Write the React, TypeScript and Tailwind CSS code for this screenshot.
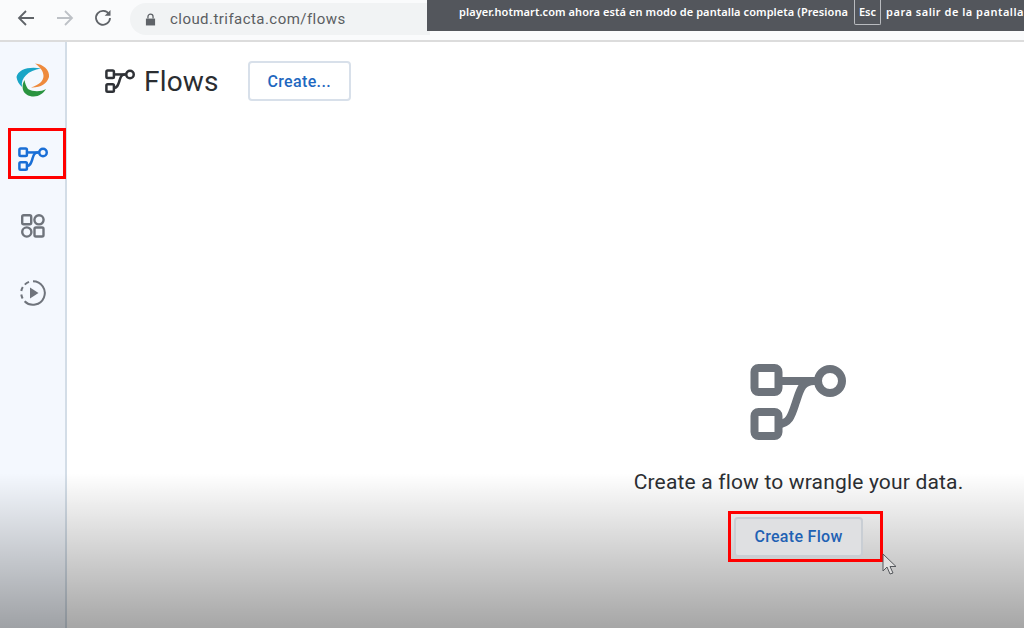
import React from "react";

function FlowIcon({ className, color }: { className: string; color: string }) {
  return (
    <svg viewBox="0 0 96 76" className={className} fill="none" stroke={color} strokeWidth={8}>
      <rect x="4.5" y="4" width="24" height="24" rx="4" />
      <rect x="4.5" y="48" width="24" height="24" rx="4" />
      <circle cx="80" cy="17" r="12" />
      <path d="M28 17H68" />
      <path d="M28 60C40 60 42 50 46 38C50 26 52 17 64 17" />
    </svg>
  );
}

function Logo() {
  return (
    <svg viewBox="0 0 34 34" className="w-[34px] h-[34px]" fill="none">
      <path d="M25 5.5C14 3 2 6 0.5 14C1 18 3 21 6 24C4.5 15 12 7.5 25 5.5Z" fill="#19a5c6" />
      <path d="M19 0.5C27 1 34 7 33 14C31 21 24 25 15 24.5C23 22 27.5 18 27.5 13C27.5 8 24 4 19 0.5Z" fill="#ee8a3c" />
      <path d="M8.5 17C5 23 6 31 14 33C21 35 27 31 30 26C25 29 17 29 12 26C10 23 9 20 8.5 17Z" fill="#2a9440" />
    </svg>
  );
}

function AppsIcon() {
  return (
    <svg viewBox="0 0 24 24" className="w-[24px] h-[24px]" fill="none" stroke="#6f747c" strokeWidth={2.4}>
      <rect x="1.2" y="1.2" width="9" height="9" rx="1.5" />
      <circle cx="18" cy="5.8" r="4.6" />
      <circle cx="5.8" cy="18" r="4.6" />
      <rect x="13.5" y="13.5" width="9" height="9" rx="1.5" />
    </svg>
  );
}

function RunIcon() {
  return (
    <svg viewBox="0 0 26 26" className="w-[26px] h-[26px]" fill="none">
      <path d="M13 1.2A11.8 11.8 0 1 1 4.6 21.3" stroke="#6f747c" strokeWidth={2} />
      <path d="M2.6 18.4A11.8 11.8 0 0 1 1.3 14.5M1.3 11A11.8 11.8 0 0 1 2.8 7M4.8 4.6A11.8 11.8 0 0 1 9 1.9" stroke="#6f747c" strokeWidth={2} />
      <path d="M10 7.5L18.5 13L10 18.5Z" fill="#6f747c" />
    </svg>
  );
}

export default function App() {
  return (
    <div className="relative w-[1024px] h-[628px] overflow-hidden bg-white flex flex-col font-['Roboto',sans-serif]">
      <header className="h-[42px] shrink-0 flex items-start bg-[#fafbfc] border-b-2 border-[#dcdcdc]">
        <div className="flex items-center h-9 pl-[17px] gap-[21px] shrink-0">
          <svg viewBox="0 0 18 18" className="w-[18px] h-[18px]" fill="none" stroke="#5f6368" strokeWidth={1.8}>
            <path d="M17 9H2M9 2L2 9L9 16" />
          </svg>
          <svg viewBox="0 0 18 18" className="w-[18px] h-[18px]" fill="none" stroke="#bdc1c6" strokeWidth={1.8}>
            <path d="M1 9H16M9 2L16 9L9 16" />
          </svg>
          <svg viewBox="0 0 18 18" className="w-[18px] h-[18px] -ml-[1px]" fill="none" stroke="#5f6368" strokeWidth={1.8}>
            <path d="M15 5.2A7 7 0 1 0 16 9" />
            <path d="M16.5 1V6.8H10.7Z" fill="#5f6368" stroke="none" />
          </svg>
        </div>
        <div className="ml-[18px] mt-[3px] w-[300px] h-[32px] flex items-center pl-[15px] bg-[#f1f3f4] rounded-l-2xl shrink-0">
          <svg viewBox="0 0 12 14" className="w-[11px] h-[13px]" fill="#5f6368">
            <path d="M1 6H11V13.5H1Z" />
            <path d="M3.2 6V4A2.8 2.8 0 0 1 8.8 4V6" fill="none" stroke="#5f6368" strokeWidth={1.4} />
          </svg>
          <span className="ml-[14px] text-[15px] tracking-[0.45px] whitespace-nowrap text-[#5b5e62]">cloud.trifacta.com/flows</span>
        </div>
        <div className="absolute left-[427px] top-0 w-[597px] h-[31px] bg-[#53565c] flex items-start pl-[32px] text-white text-[11px] font-semibold leading-[24px] whitespace-nowrap font-['Noto_Sans',sans-serif] overflow-hidden tracking-[0.07px]">
          <span>player.hotmart.com ahora está en modo de pantalla completa (Presiona</span>
          <span className="ml-[6px] mr-[5px] w-[28px] h-[25px] flex items-center justify-center border border-t-0 border-[#b9bbbf] rounded-b-[2px]">Esc</span>
          <span className="tracking-[0.5px]">para salir de la pantalla</span>
        </div>
      </header>

      <div className="flex-1 flex min-h-0">
        <aside className="w-[67px] shrink-0 bg-[#f4f8fe] border-r-2 border-[#d3dde7] flex flex-col items-center">
          <div className="mt-[21px]"><Logo /></div>
          <div className="relative z-10 mt-[31px] self-start ml-[8px] w-[58px] h-[51px] flex items-start pl-[7px] pt-[16px] border-[3px] border-[#ff0000]">
            <FlowIcon className="w-[30px] h-[24px] shrink-0" color="#1a6fd6" />
          </div>
          <div className="mt-[35px]"><AppsIcon /></div>
          <div className="mt-[42px]"><RunIcon /></div>
        </aside>

        <main className="flex-1 relative min-w-0">
          <div className="flex items-center pl-[38px] pt-[19px]">
            <FlowIcon className="w-[30px] h-[24px]" color="#2f3237" />
            <h1 className="ml-[9px] h-[40px] text-[28px] leading-[42px] text-[#2a2d31] font-normal tracking-[0.2px]">Flows</h1>
            <button className="ml-[29px] w-[103px] h-[40px] pt-[1px] rounded-[4px] bg-white border-2 border-[#d8e0ea] text-[#1f68c0] text-[16px] tracking-[0.35px] font-medium">Create...</button>
          </div>

          <div className="flex flex-col items-center ml-[564px] w-[335px] mt-[263px]">
            <FlowIcon className="w-[96px] h-[76px] -ml-[2px]" color="#6d737b" />
            <p className="mt-[28px] text-[21px] leading-[28px] text-[#2c2f33] whitespace-nowrap tracking-[0.17px]">Create a flow to wrangle your data.</p>
            <div className="relative z-10 ml-[14px] mt-[15px] w-[155px] h-[51px] border-[3px] border-[#ff0000] flex items-center pl-[3px]">
              <button className="w-[129px] h-[40px] rounded-[4px] bg-[#dfe0e2] border-2 border-[#c9ced4] text-[#1f62b4] text-[16px] tracking-[0.3px] font-medium">Create Flow</button>
              <svg viewBox="0 0 16 24" className="absolute left-[151px] top-[39px] w-[16px] h-[24px]" fill="#e0e0e0" stroke="#55585c" strokeWidth={1}>
                <path d="M1 1V18L5 14L8 21L11 20L8 13.5H14Z" />
              </svg>
            </div>
          </div>
        </main>
      </div>

      <div className="absolute left-0 right-0 bottom-0 h-[155px] pointer-events-none bg-gradient-to-b from-black/0 to-black/35" />
    </div>
  );
}
